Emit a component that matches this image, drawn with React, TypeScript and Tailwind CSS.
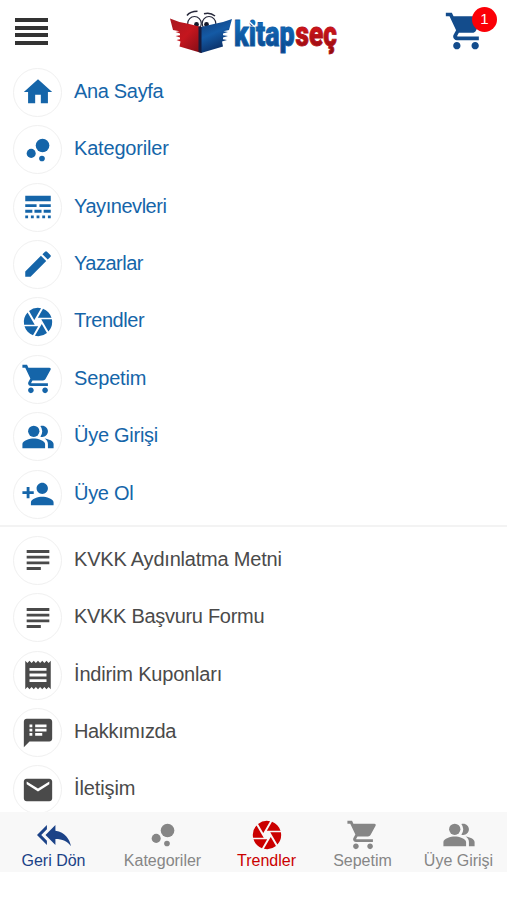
import React from 'react';
import type { IconType } from 'react-icons';
import {
  MdBubbleChart,
  MdCamera,
  MdCreate,
  MdEmail,
  MdHome,
  MdLineStyle,
  MdPeopleAlt,
  MdPersonAdd,
  MdReceipt,
  MdReplyAll,
  MdShoppingCart,
  MdSpeakerNotes,
  MdSubject
} from 'react-icons/md';

interface MenuItem {
  label: string;
  icon: IconType;
  tracking: string;
}

interface TabItem {
  label: string;
  icon: IconType;
  color: string;
  cell: string;
}

const mainItems: MenuItem[] = [
  { label: 'Ana Sayfa', icon: MdHome, tracking: 'tracking-[-0.33px]' },
  { label: 'Kategoriler', icon: MdBubbleChart, tracking: 'tracking-[-0.18px]' },
  { label: 'Yayınevleri', icon: MdLineStyle, tracking: 'tracking-[-0.45px]' },
  { label: 'Yazarlar', icon: MdCreate, tracking: 'tracking-[-0.5px]' },
  { label: 'Trendler', icon: MdCamera, tracking: 'tracking-[-0.45px]' },
  { label: 'Sepetim', icon: MdShoppingCart, tracking: 'tracking-[-0.15px]' },
  { label: 'Üye Girişi', icon: MdPeopleAlt, tracking: 'tracking-[-0.27px]' },
  { label: 'Üye Ol', icon: MdPersonAdd, tracking: 'tracking-[-0.3px]' }
];

const infoItems: MenuItem[] = [
  { label: 'KVKK Aydınlatma Metni', icon: MdSubject, tracking: 'tracking-[-0.2px]' },
  { label: 'KVKK Başvuru Formu', icon: MdSubject, tracking: 'tracking-[-0.3px]' },
  { label: 'İndirim Kuponları', icon: MdReceipt, tracking: 'tracking-[-0.18px]' },
  { label: 'Hakkımızda', icon: MdSpeakerNotes, tracking: 'tracking-[-0.35px]' },
  { label: 'İletişim', icon: MdEmail, tracking: 'tracking-[-0.1px]' }
];

const tabs: TabItem[] = [
  { label: 'Geri Dön', icon: MdReplyAll, color: 'text-[#1b4287]', cell: 'w-[107px]' },
  { label: 'Kategoriler', icon: MdBubbleChart, color: 'text-[#868686]', cell: 'w-[111px]' },
  { label: 'Trendler', icon: MdCamera, color: 'text-[#cb0000]', cell: 'w-[97px]' },
  { label: 'Sepetim', icon: MdShoppingCart, color: 'text-[#868686]', cell: 'w-[95px]' },
  { label: 'Üye Girişi', icon: MdPeopleAlt, color: 'text-[#868686]', cell: 'w-[97px]' }
];

const Logo: React.FC = () => (
  <svg width="172" height="50" viewBox="168 6 172 50" role="img" aria-label="kitapseç" className="overflow-visible">
    <defs>
      <linearGradient id="blue" x1="0" y1="0" x2="0" y2="1">
        <stop offset="0.1" stopColor="#1276c8" />
        <stop offset="1" stopColor="#0b3f82" />
      </linearGradient>
      <linearGradient id="back" x1="0" y1="0" x2="0.4" y2="1">
        <stop offset="0" stopColor="#123c78" />
        <stop offset="0.5" stopColor="#145aa5" />
        <stop offset="1" stopColor="#0b2d63" />
      </linearGradient>
      <linearGradient id="red" x1="0" y1="0" x2="0" y2="1">
        <stop offset="0.3" stopColor="#d5141a" />
        <stop offset="1" stopColor="#870b10" />
      </linearGradient>
      <linearGradient id="front" x1="0" y1="0" x2="1" y2="1">
        <stop offset="0" stopColor="#a81820" />
        <stop offset="0.5" stopColor="#c5161e" />
        <stop offset="1" stopColor="#7d0d16" />
      </linearGradient>
    </defs>
    {/* Eyes */}
    <g fill="#fff" stroke="#26283a" strokeWidth="1.2">
      <ellipse cx="194.5" cy="23.5" rx="6.8" ry="7" />
      <ellipse cx="209" cy="23.5" rx="6.8" ry="7" />
      <path d="M187 15.5q3-4 10.5-4.2M204 13.8q6-2 11 2.2" fill="none" strokeWidth="1.5" />
    </g>
    <circle cx="196.5" cy="24.5" r="2.4" fill="#16182a" />
    <circle cx="206.5" cy="24.5" r="2.4" fill="#16182a" />
    {/* Book covers with the fingers at both sides */}
    <path
      d="M170 18.5q9 4 17 5l14.500 3.500v26l-22-6.500 1-5-4-1.500 3.500-.8v-1.800l-4.500-1.300 4.500-.8v-1.800l-4.500-1.400 4-.8-6.500-1.300z"
      fill="url(#front)"
    />
    <path
      d="M232 19q-9 3.500-17 4.700l-14 3.300v26l22-6.500-1-5 5-1.500-4-.8v-1.800l5-1.300-5-.8v-1.800l5-1.400-4.500-.8 5.500-1.300z"
      fill="url(#back)"
    />
    <path d="M198.5 26.3l3 .7v26l-3-.9z" fill="#161b3c" />
    {/* Word mark */}
    <g fontSize="35" strokeWidth="0.9" className="font-[Roboto,sans-serif] font-black">
      <text transform="translate(234 46) scale(0.765 1)" fill="url(#blue)" stroke="#0f5ba5">
        kitap
      </text>
      <text transform="translate(295.5 46) scale(0.75 1)" fill="url(#red)" stroke="#b51218">
        seç
      </text>
    </g>
    <path d="M248 20.500l7 6.500" stroke="#fff" strokeWidth="1.3" />
  </svg>
);

const MenuRow: React.FC<{ item: MenuItem }> = ({ item }) => {
  const Icon = item.icon;
  return (
    <li className="flex h-[57.4px] items-center pl-[13px]">
      <span className="flex size-[49px] shrink-0 items-center justify-center rounded-full border border-[#f0f0f0]">
        <Icon size={34} />
      </span>
      <a href="#" className={`ml-3 pb-[3px] text-[20px] leading-6 whitespace-nowrap ${item.tracking}`}>
        {item.label}
      </a>
    </li>
  );
};

const App: React.FC = () => {
  return (
    <div className="flex h-[900px] w-[507px] flex-col overflow-hidden bg-white font-['Liberation_Sans',Arial,sans-serif]">
      {/* Header */}
      <header className="flex h-[63.6px] shrink-0 items-start pl-[15px] pr-[10px]">
        <button className="mt-[18px] flex w-[33px] flex-col gap-[3.5px]" aria-label="Menü">
          <span className="h-[4px] w-full bg-[#333]" />
          <span className="h-[4px] w-full bg-[#333]" />
          <span className="h-[4px] w-full bg-[#333]" />
          <span className="h-[4px] w-full bg-[#333]" />
        </button>
        <div className="ml-[120px] mt-[6px]">
          <Logo />
        </div>
        <button className="relative ml-auto mt-[9px] h-[44px] w-[53px] text-[#134c8c]" aria-label="Sepet">
          <MdShoppingCart size={44} />
          <span className="absolute right-0 top-[-2px] flex size-[25px] items-center justify-center rounded-full bg-[#fb0007] text-[15px] text-white">
            1
          </span>
        </button>
      </header>

      {/* Menu */}
      <main className="flex-1 overflow-hidden">
        <ul className="text-[#1565a9]">
          {mainItems.map(item => (
            <MenuRow key={item.label} item={item} />
          ))}
        </ul>
        <div className="mt-[2.4px] mb-[4.6px] h-[2px] bg-[#f3f3f3]" />
        <ul className="text-[#4a4a4a]">
          {infoItems.map(item => (
            <MenuRow key={item.label} item={item} />
          ))}
        </ul>
      </main>

      {/* Bottom tabs */}
      <nav className="mb-[28px] flex h-[60px] shrink-0 bg-[#f8f8f8]">
        {tabs.map(tab => {
          const Icon = tab.icon;
          return (
            <a key={tab.label} href="#" className={`flex flex-col items-center pt-[6px] ${tab.cell} ${tab.color}`}>
              <Icon size={34} className="shrink-0" />
              <span className="-mt-px text-[16px] leading-5 whitespace-nowrap">{tab.label}</span>
            </a>
          );
        })}
      </nav>
    </div>
  );
};

export default App;
